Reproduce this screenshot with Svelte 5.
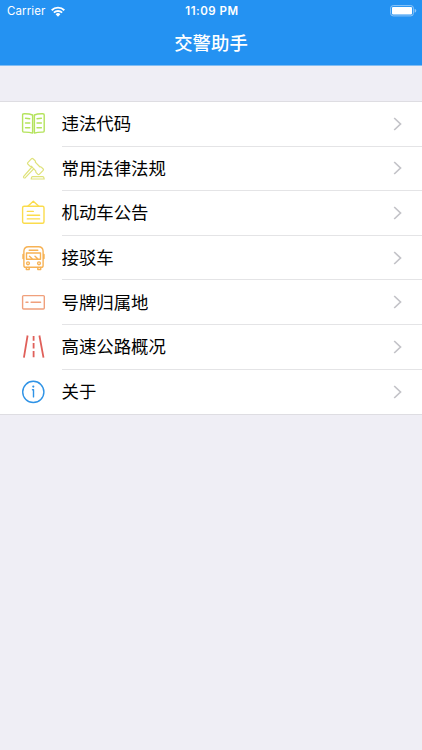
<script lang="ts">
  interface MenuItem {
    icon: string;
    label: string;
    color: string;
  }

  const items: MenuItem[] = [
    { icon: 'book', label: '违法代码', color: '#b4e35c' },
    { icon: 'gavel', label: '常用法律法规', color: '#dfe27a' },
    { icon: 'board', label: '机动车公告', color: '#fbdc4c' },
    { icon: 'bus', label: '接驳车', color: '#f7b254' },
    { icon: 'plate', label: '号牌归属地', color: '#f0a07c' },
    { icon: 'road', label: '高速公路概况', color: '#e0605a' },
    { icon: 'info', label: '关于', color: '#2f93e6' }
  ];
</script>

<div class="screen">
  <header>
    <div class="status-bar">
      <div class="carrier">
        <span>Carrier</span>
        <svg class="wifi" viewBox="0 0 14 11">
          <path d="M.7 4.2a9 9 0 0 1 12.6 0M2.9 6.6a5.9 5.9 0 0 1 8.2 0" />
          <path class="dot" d="M4.6 8.3a3.4 3.4 0 0 1 4.8 0L7 10.7z" />
        </svg>
      </div>
      <span class="time">11:09 PM</span>
      <svg class="battery" viewBox="0 0 27 12">
        <rect class="shell" x="0.6" y="0.6" width="22.8" height="10.3" rx="2.6" />
        <rect class="charge" x="2" y="2" width="20" height="7.5" rx="1" />
        <path class="cap" d="M24.6 3.8q1.7.5 1.7 2t-1.7 2z" />
      </svg>
    </div>
    <h1>交警助手</h1>
  </header>

  <ul class="menu">
    {#each items as item}
      <li class="row">
        <svg class="icon" viewBox="0 0 24 24" style="color: {item.color}">
          {#if item.icon === 'book'}
            <path d="M11.6 3C9 1.9 5.5 1.7 2.7 1.8q-1.1 0-1.1 1.1v16.2q0 1 1.1 1c3-.1 6.2.1 8.9 1zM13.4 3c2.4-1.1 5.9-1.3 8.7-1.2q1.1 0 1.1 1.1v16.2q0 1-1.1 1c-3-.1-6.2.1-8.7 1z" />
            <path d="M4.5 6.3l4.300.4M4.500 11h4.300M4.500 15.800h4.300M16 6.700l4.400-.4M16 11h4.400M16 15.800h4.400" />
          {:else if item.icon === 'gavel'}
            <g class="thin">
              <path d="M10.600 1.700q.7-.6 1.400 0l2.200 2.100q.6.6.1 1.300l4.700 4.900q.7-.5 1.300.1l1.900 1.900q.6.7 0 1.400l-3.900 4q-.7.600-1.400 0l-1.900-2q-.6-.7-.1-1.300l-4.700-4.900q-.7.500-1.300-.1L6.800 7q-.6-.7 0-1.400z" />
              <path d="M10.900 10L2.700 19.300q-.5.800.100 1.400.8.600 1.500 0l8.400-8.900" />
              <path d="M11.500 19.700h10.300q1.200.2 1.400 2.300H10.200q.1-2.100 1.300-2.300z" />
            </g>
          {:else if item.icon === 'board'}
            <rect x="1.600" y="5.300" width="21.400" height="16.900" rx="1.500" />
            <path d="M6.800 5.200L12.300.2l5.500 5M6.300 10.400h6M6.300 14.200h12.300M6.300 17.900h12.300" />
          {:else if item.icon === 'bus'}
            <path d="M4.800 21.300q-1.900 0-1.900-1.900V5Q3.200.8 7.400.8h10.200q4.200 0 4.500 4.200v14.400q0 1.900-1.900 1.900zM2 8.500v4M23 8.500v4M8.200 4.200h8.600" />
            <path d="M5.500 7h14v6.300h-14zM8.500 10.300l3 2.800M14 10.300l3 2.800M5.300 21.500v2h2.900v-2M16.800 21.500v2h2.900v-2" />
            <circle cx="7" cy="17.300" r="1.400" />
            <circle cx="18" cy="17.300" r="1.400" />
          {:else if item.icon === 'plate'}
            <rect x="1.600" y="4.600" width="21.700" height="13.400" rx="1" />
            <path d="M5 11.200h2M10.100 11.200h9.500" />
          {:else if item.icon === 'road'}
            <path class="thick" d="M6.600.5L2.900 22.600M18.400.5l4.100 22.100M12.600 1v4.800M12.600 8v5.500M12.600 16v6.300" />
          {:else}
            <circle cx="12.300" cy="11.900" r="10.600" />
            <path d="M11.500 9.700h1v7.200" />
            <circle class="fill" cx="12.300" cy="6.600" r="1.100" />
          {/if}
        </svg>
        <div class="content">
          <span class="label">{item.label}</span>
          <svg class="chevron" viewBox="0 0 9 14">
            <path d="M1.200 1l6.300 6-6.300 6" />
          </svg>
        </div>
      </li>
    {/each}
  </ul>
</div>

<style>
  :global(body) {
    background: #efeef5;
  }

  .screen {
    min-height: 750px;
    background: #efeef5;
    font-family: Inter, 'Noto Sans CJK SC', sans-serif;
  }

  header {
    box-sizing: border-box;
    height: 66px;
    background: #2492f2;
    border-bottom: 1px solid #82bdf3;
    color: #fff;
  }

  .status-bar {
    display: grid;
    grid-template-columns: 1fr auto 1fr;
    align-items: center;
    height: 22px;
    padding: 0 5px 0 7px;
    font-size: 11.5px;
    line-height: 22px;
  }

  .carrier {
    display: flex;
    align-items: center;
    gap: 6px;
    letter-spacing: 0.1px;
  }

  .wifi {
    width: 14px;
    height: 11px;
    fill: none;
    stroke: #fff;
    stroke-width: 1.9;
  }

  .wifi .dot {
    fill: #fff;
    stroke: none;
  }

  .time {
    font-weight: 600;
    letter-spacing: 0.5px;
  }

  .battery {
    justify-self: end;
    width: 27px;
    height: 12px;
  }

  .shell {
    fill: none;
    stroke: #8fc6f8;
    stroke-width: 1;
  }

  .charge {
    fill: #fff;
  }

  .cap {
    fill: #8fc6f8;
  }

  h1 {
    margin: 0;
    font-size: 18.4px;
    font-weight: 500;
    line-height: 42px;
    text-align: center;
  }

  .menu {
    margin: 35px 0 0;
    padding: 0;
    list-style: none;
    background: #fff;
    border-top: 1px solid #dedde2;
    border-bottom: 1px solid #dedde2;
  }

  .row {
    display: flex;
    align-items: center;
    height: 44.6px;
    padding-left: 21px;
  }

  .icon {
    flex: none;
    width: 24px;
    height: 24px;
    margin-right: 16.5px;
    overflow: visible;
    fill: none;
    stroke: currentColor;
    stroke-width: 1.4;
    stroke-linejoin: round;
    stroke-linecap: round;
  }

  .icon .thin {
    stroke-width: 1.2;
  }

  .icon .thick {
    stroke-width: 1.8;
    stroke-linecap: butt;
  }

  .icon .fill {
    fill: currentColor;
    stroke: none;
  }

  .content {
    box-sizing: border-box;
    flex: 1;
    display: flex;
    align-items: center;
    justify-content: space-between;
    height: 100%;
    padding-right: 20.5px;
    border-bottom: 1px solid #e4e4e6;
  }

  .row:last-child .content {
    border-bottom: none;
  }

  .label {
    padding-top: 1px;
    color: #000;
    font-size: 17.4px;
    line-height: 44px;
  }

  .chevron {
    width: 9px;
    height: 14px;
    fill: none;
    stroke: #c3c3c8;
    stroke-width: 1.7;
  }
</style>
